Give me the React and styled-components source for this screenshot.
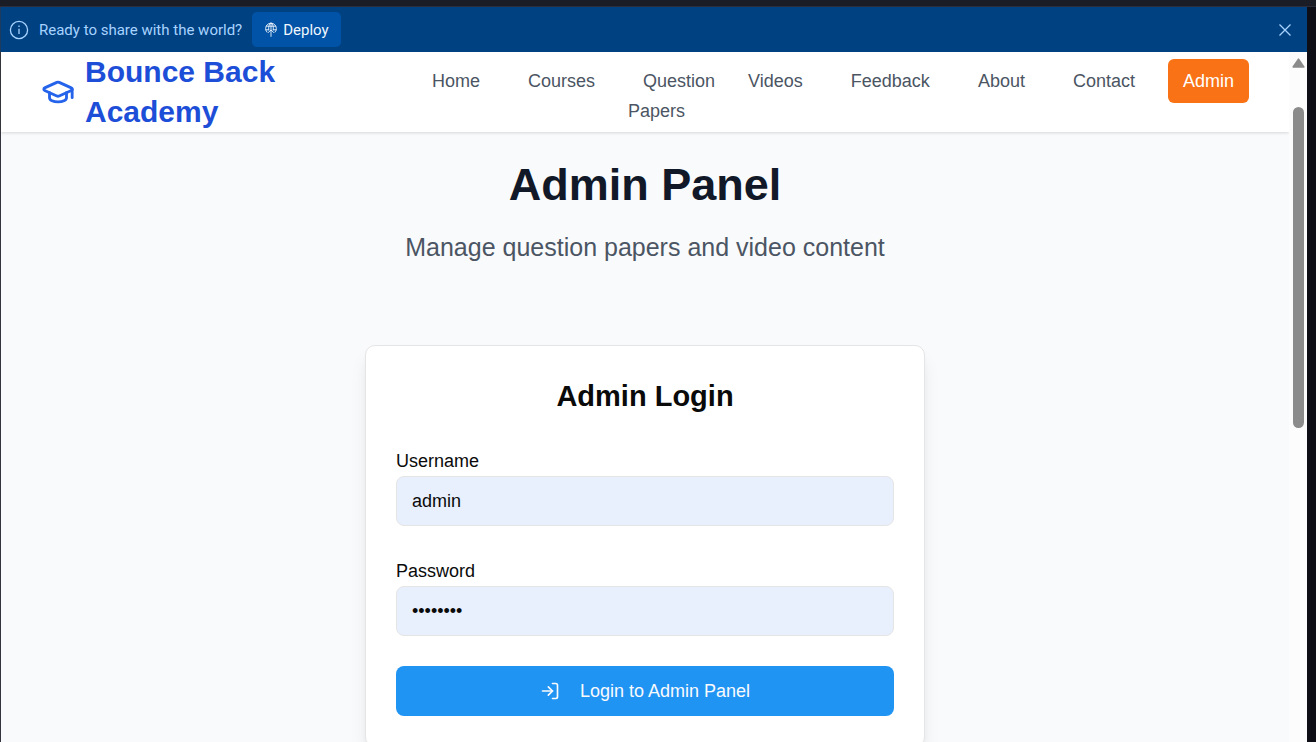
import React from 'react';
import styled, { createGlobalStyle } from 'styled-components';
import { GraduationCap, LogIn } from 'lucide-react';

const GlobalStyle = createGlobalStyle`
  *, *::before, *::after { box-sizing: border-box; }
  body {
    margin: 0;
    background: #0e0e16;
    font-family: "Liberation Sans", Arial, sans-serif;
    font-size: 18px;
    line-height: 30px;
    color: #0a0a0a;
  }
  h1, h2, p, ul { margin: 0; padding: 0; }
  button, input { font: inherit; }
`;

const Shell = styled.div`
  display: flex;
  flex-direction: column;
  height: 100vh;
  padding-right: 9px;
  overflow: hidden;
`;

const TopStrip = styled.div`
  flex: none;
  height: 7px;
  margin-right: -9px;
  background: #1a1d25;
  border-bottom: 1px solid #2b2d3a;
`;

const Banner = styled.aside`
  flex: none;
  display: flex;
  align-items: center;
  gap: 10px;
  height: 45px;
  padding: 0 14px 0 8px;
  border-left: 1px solid #1d3a5f;
  background: #004182;
  color: #a8d3ff;
  font-family: Roboto, sans-serif;
  font-size: 15px;
  line-height: 20px;
`;

const InfoIcon = styled.svg`
  width: 20px;
  height: 20px;
`;

const DeployButton = styled.button`
  display: flex;
  align-items: center;
  gap: 5px;
  height: 35px;
  padding: 0 12px;
  border: 0;
  border-radius: 5px;
  background: #0053a6;
  color: #f0f7ff;
`;

const CloseButton = styled.button`
  display: flex;
  margin-left: auto;
  padding: 0;
  border: 0;
  background: none;
  color: #a8d3ff;
`;

const Viewport = styled.div`
  flex: 1;
  display: flex;
  min-height: 0;
  border-left: 1px solid #33343c;
  background: #f9fafc;
`;

const Page = styled.div`
  flex: 1;
  min-width: 0;
  overflow: hidden;
`;

const ScrollTrack = styled.div`
  flex: none;
  display: flex;
  flex-direction: column;
  align-items: center;
  gap: 39px;
  width: 18px;
  padding-top: 6px;
  background: #fcfcfc;
`;

const ScrollThumb = styled.div`
  width: 11px;
  height: 321px;
  border-radius: 6px;
  background: #8b8b8b;
`;

const Header = styled.header`
  display: flex;
  gap: 40px;
  height: 80px;
  padding: 0 40px;
  background: #ffffff;
  box-shadow: 0 1px 3px rgba(0, 0, 0, 0.14);
`;

const Logo = styled.a`
  flex: 1;
  display: flex;
  align-items: center;
  gap: 10px;
  min-width: 0;
  color: #1d4ed8;
  font-size: 30px;
  font-weight: 700;
  line-height: 40px;
  text-decoration: none;

  svg { flex: none; color: #2563eb; }
`;

const NavList = styled.ul`
  display: flex;
  gap: 18px;
  padding-top: 14px;
  list-style: none;
`;

const NavItem = styled.li`
  width: min-content;
`;

const NavLink = styled.a`
  padding: 12px 15px;
  border-radius: 6px;
  background: ${(p) => (p.$active ? '#f97316' : 'transparent')};
  color: ${(p) => (p.$active ? '#ffffff' : '#4b5563')};
  text-decoration: none;
`;

const Main = styled.main`
  display: flex;
  flex-direction: column;
  align-items: center;
  padding: 28px 20px 80px;
`;

const Title = styled.h1`
  color: #111827;
  font-size: 45px;
  line-height: 50px;
`;

const Subtitle = styled.p`
  margin-top: 20px;
  color: #4b5563;
  font-size: 25px;
  line-height: 35px;
`;

const Card = styled.form`
  display: flex;
  flex-direction: column;
  gap: 30px;
  width: 100%;
  max-width: 560px;
  margin-top: 80px;
  padding: 30px;
  border: 1px solid #e5e5e5;
  border-radius: 10px;
  background: #ffffff;
  box-shadow: 0 12px 19px -4px rgba(0, 0, 0, 0.1), 0 5px 8px -5px rgba(0, 0, 0, 0.1);
`;

const CardTitle = styled.h2`
  font-size: 29px;
  line-height: 40px;
  text-align: center;
`;

const Field = styled.div`
  display: flex;
  flex-direction: column;
`;

const Input = styled.input`
  width: 100%;
  height: 50px;
  padding: 0 15px;
  border: 1px solid #e5e5e5;
  border-radius: 8px;
  background: #e8f0fe;
  color: #0a0a0a;
  outline: none;
`;

const SubmitButton = styled.button`
  display: flex;
  align-items: center;
  justify-content: center;
  gap: 20px;
  height: 50px;
  padding: 0 20px;
  border: 0;
  border-radius: 8px;
  background: #2094f3;
  color: #f8fafc;
`;

const links = ['Home', 'Courses', 'Question Papers', 'Videos', 'Feedback', 'About', 'Contact', 'Admin'];

function DeployIcon() {
  return (
    <svg width="14" height="17" viewBox="0 0 14 17" fill="none" stroke="currentColor" strokeWidth="0.9" strokeLinecap="round" aria-hidden="true">
      <path d="M3 11.2A5.4 5.4 0 1 1 11 11.2" />
      <path d="M2.4 5.2h9.2M1.8 8.8h2.8M9.4 8.8h2.8" />
      <path d="M4.8 9C4.2 5.8 5.2 3 7 2C8.8 3 9.8 5.8 9.2 9" />
      <path d="M7 2v13.4M4.4 11.4l2.6-2.4l2.6 2.4" />
    </svg>
  );
}

export default function App() {
  return (
    <>
      <GlobalStyle />
      <Shell>
        <TopStrip />
        <Banner>
          <InfoIcon viewBox="0 0 20 20" fill="none" stroke="currentColor" strokeWidth="1.3" aria-hidden="true">
            <circle cx="10" cy="10" r="8.6" />
            <path d="M10 8.7v5.2" />
            <path d="M10 5.5v1.5" />
          </InfoIcon>
          <span>Ready to share with the world?</span>
          <DeployButton type="button">
            <DeployIcon />
            Deploy
          </DeployButton>
          <CloseButton type="button" aria-label="Close">
            <svg width="16" height="16" viewBox="0 0 16 16" fill="none" stroke="currentColor" strokeWidth="1.3" aria-hidden="true">
              <path d="M2.5 2.5l11 11M13.5 2.5l-11 11" />
            </svg>
          </CloseButton>
        </Banner>
        <Viewport>
          <Page>
            <Header>
              <Logo href="#">
                <GraduationCap size={34} />
                <span>Bounce Back Academy</span>
              </Logo>
              <nav>
                <NavList>
                  {links.map((label) => (
                    <NavItem key={label}>
                      <NavLink href="#" $active={label === 'Admin'}>{label}</NavLink>
                    </NavItem>
                  ))}
                </NavList>
              </nav>
            </Header>
            <Main>
              <Title>Admin Panel</Title>
              <Subtitle>Manage question papers and video content</Subtitle>
              <Card>
                <CardTitle>Admin Login</CardTitle>
                <Field>
                  <label htmlFor="username">Username</label>
                  <Input id="username" type="text" defaultValue="admin" />
                </Field>
                <Field>
                  <label htmlFor="password">Password</label>
                  <Input id="password" type="password" defaultValue="admin123" />
                </Field>
                <SubmitButton type="button">
                  <LogIn size={20} />
                  Login to Admin Panel
                </SubmitButton>
              </Card>
            </Main>
          </Page>
          <ScrollTrack>
            <svg width="13" height="10" viewBox="0 0 13 10" aria-hidden="true">
              <path d="M6.5 1.2L11.8 9H1.2Z" fill="#8b8b8b" stroke="#8b8b8b" strokeWidth="1.6" strokeLinejoin="round" />
            </svg>
            <ScrollThumb />
          </ScrollTrack>
        </Viewport>
      </Shell>
    </>
  );
}
